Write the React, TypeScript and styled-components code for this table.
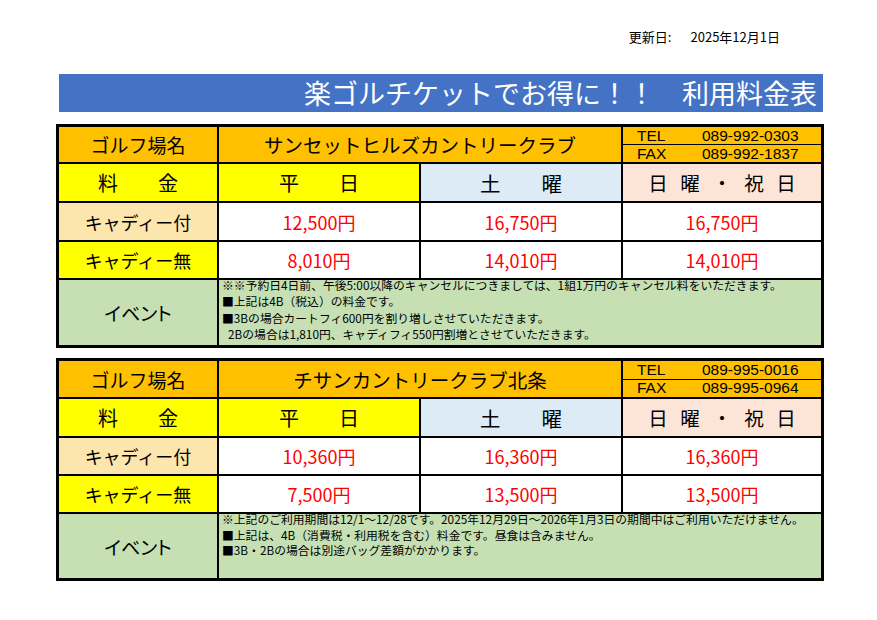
import React from "react";
import styled, { createGlobalStyle } from "styled-components";

const Global = createGlobalStyle`
  html, body { margin: 0; padding: 0; background: #fff; }
  body { font-family: "Noto Sans CJK JP", "Noto Sans", sans-serif; color: #000; }
`;

const Page = styled.div`
  width: 768px;
  padding: 29px 0 0 56px;
  display: flex;
  flex-direction: column;
`;

const Updated = styled.div`
  align-self: flex-end;
  margin-right: 44px;
  font-size: 13px;
  line-height: 16px;
  height: 16px;
  display: flex;
  gap: 19px;
`;

const Banner = styled.div`
  margin: 29px 1px 12px 3px;
  height: 38px;
  background: #4472c4;
  color: #fff;
  font-size: 27px;
  line-height: 38px;
  text-align: right;
  padding-right: 6px;
  white-space: pre;
`;

const Table = styled.div<{ $rows: string; $mb: number }>`
  display: grid;
  grid-template-columns: 158px 200px 200px 198px;
  grid-template-rows: ${(p) => p.$rows};
  gap: 2px;
  background: #000;
  border: 3px solid #000;
  margin-bottom: ${(p) => p.$mb}px;
`;

const Cell = styled.div<{ $bg: string; $span?: number; $size?: number; $red?: boolean; $palt?: boolean }>`
  background: ${(p) => p.$bg};
  grid-column: span ${(p) => p.$span ?? 1};
  display: flex;
  align-items: center;
  justify-content: center;
  font-size: ${(p) => p.$size ?? 18}px;
  color: ${(p) => (p.$red ? "#ff0000" : "#000")};
  white-space: pre;
  font-feature-settings: ${(p) => (p.$palt ? '"palt"' : "normal")};
`;

const Spaced = styled.span<{ $ls: number }>`
  letter-spacing: ${(p) => p.$ls}px;
  margin-right: -${(p) => p.$ls}px;
`;

const Contact = styled.div`
  display: flex;
  flex-direction: column;
  gap: 1px;
  background: #000;
`;

const ContactLine = styled.div`
  flex: 1;
  background: #ffc000;
  display: flex;
  align-items: center;
  font-family: "Liberation Sans", Arial, sans-serif;
  font-size: 15.5px;
  line-height: 14px;
  padding-left: 14px;
`;

const ContactKey = styled.span`
  width: 65px;
`;

const EventCell = styled.div<{ $gap: number }>`
  grid-column: span 3;
  background: #c6e0b4;
  padding: 0 0 0 3px;
  font-size: 11.8px;
  display: flex;
  flex-direction: column;
  gap: ${(p) => p.$gap}px;
`;

const EventLine = styled.div<{ $indent?: number }>`
  line-height: 10px;
  height: 10px;
  white-space: pre;
  padding-left: ${(p) => p.$indent ?? 0}px;
`;

type Course = {
  name: string;
  tel: string;
  fax: string;
  withCaddie: string[];
  noCaddie: string[];
  events: { text: string; indent?: number }[];
  rows: string;
  gap: number;
  mb: number;
};

const courses: Course[] = [
  {
    name: "サンセットヒルズカントリークラブ",
    tel: "089-992-0303",
    fax: "089-992-1837",
    withCaddie: ["12,500円", "16,750円", "16,750円"],
    noCaddie: ["8,010円", "14,010円", "14,010円"],
    events: [
      { text: "※※予約日4日前、午後5:00以降のキャンセルにつきましては、1組1万円のキャンセル料をいただきます。" },
      { text: "■上記は4B（税込）の料金です。" },
      { text: "■3Bの場合カートフィ600円を割り増しさせていただきます。" },
      { text: "2Bの場合は1,810円、キャディフィ550円割増とさせていただきます。", indent: 6 },
    ],
    rows: "35px 37px 37px 36px 65px",
    gap: 6.3,
    mb: 10,
  },
  {
    name: "チサンカントリークラブ北条",
    tel: "089-995-0016",
    fax: "089-995-0964",
    withCaddie: ["10,360円", "16,360円", "16,360円"],
    noCaddie: ["7,500円", "13,500円", "13,500円"],
    events: [
      { text: "※上記のご利用期間は12/1～12/28です。2025年12月29日～2026年1月3日の期間中はご利用いただけません。" },
      { text: "■上記は、4B（消費税・利用税を含む）料金です。昼食は含みません。" },
      { text: "■3B・2Bの場合は別途バッグ差額がかかります。" },
    ],
    rows: "36px 37px 36px 36px 64px",
    gap: 5.5,
    mb: 0,
  },
];

const PriceTable: React.FC<{ c: Course }> = ({ c }) => (
  <Table $rows={c.rows} $mb={c.mb}>
    <Cell $bg="#ffc000" $size={19}>ゴルフ場名</Cell>
    <Cell $bg="#ffc000" $span={2} $size={19.5}>{c.name}</Cell>
    <Contact>
      <ContactLine><ContactKey>TEL</ContactKey>{c.tel}</ContactLine>
      <ContactLine><ContactKey>FAX</ContactKey>{c.fax}</ContactLine>
    </Contact>

    <Cell $bg="#ffff00" $size={20}>料　　金</Cell>
    <Cell $bg="#ffff00" $size={20}>平　　日</Cell>
    <Cell $bg="#ddebf7" $size={20.5}>土　　曜</Cell>
    <Cell $bg="#fce4d6" $size={19.5}><Spaced $ls={12.5}>日曜・祝日</Spaced></Cell>

    <Cell $bg="#fde6ad">キャディー付</Cell>
    {c.withCaddie.map((p, i) => (
      <Cell key={i} $bg="#fff" $red>{p}</Cell>
    ))}

    <Cell $bg="#ffff00">キャディー無</Cell>
    {c.noCaddie.map((p, i) => (
      <Cell key={i} $bg="#fff" $red>{p}</Cell>
    ))}

    <Cell $bg="#c6e0b4" $size={19} $palt>イベント</Cell>
    <EventCell $gap={c.gap}>
      {c.events.map((e, i) => (
        <EventLine key={i} $indent={e.indent}>{e.text}</EventLine>
      ))}
    </EventCell>
  </Table>
);

export default function App() {
  return (
    <>
      <Global />
      <Page>
        <Updated>
          <span>更新日:</span>
          <span>2025年12月1日</span>
        </Updated>
        <Banner>楽ゴルチケットでお得に！！　利用料金表</Banner>
        {courses.map((c, i) => (
          <PriceTable key={i} c={c} />
        ))}
      </Page>
    </>
  );
}
